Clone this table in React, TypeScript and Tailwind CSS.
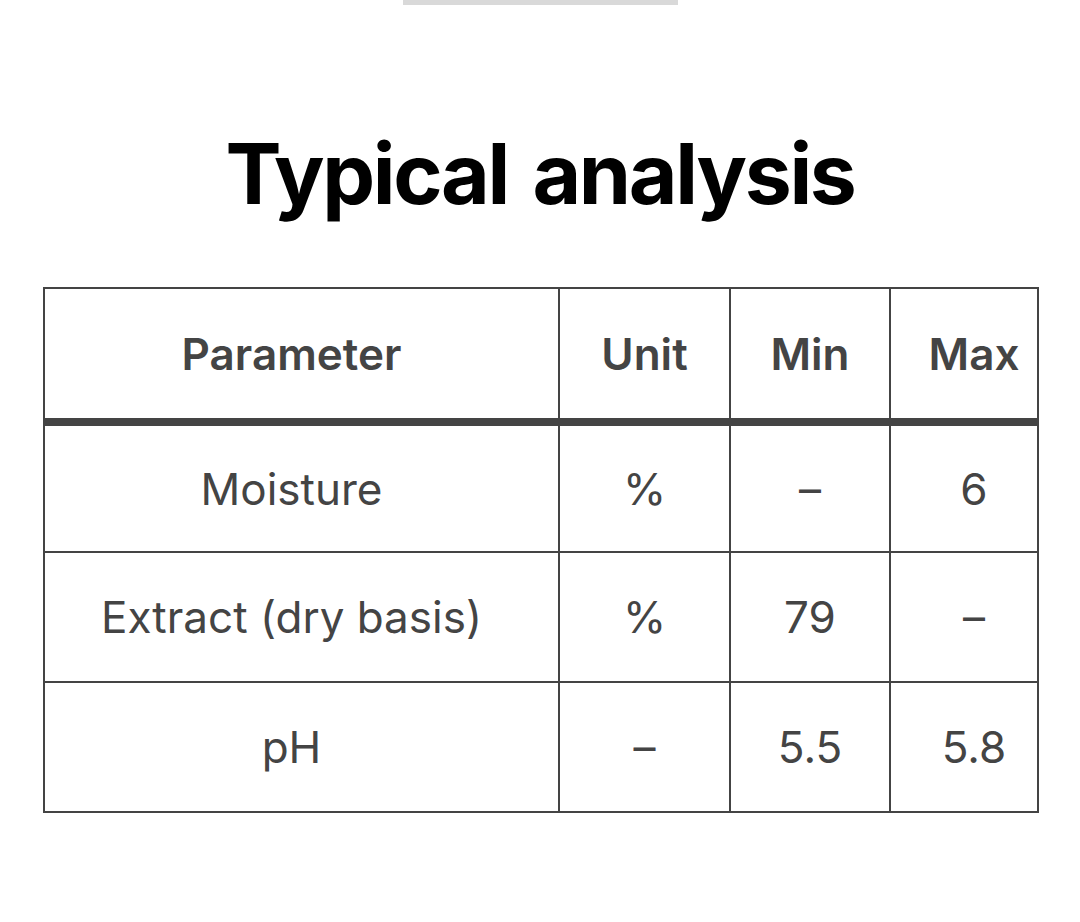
import React from 'react';

const rows = [
  { name: 'Moisture', unit: '%', min: '–', max: '6' },
  { name: 'Extract (dry basis)', unit: '%', min: '79', max: '–' },
  { name: 'pH', unit: '–', min: '5.5', max: '5.8' },
];

const App: React.FC = () => {
  return (
    <div className="min-h-[922px] bg-white font-['Inter','Liberation_Sans',sans-serif] text-[#444]">
      <div className="flex justify-center">
        <div className="h-[5px] w-[275px] bg-[#d9d9d9]" />
      </div>

      <h1 className="mt-[127px] text-center text-[84px] font-bold leading-none tracking-[-0.028em] [word-spacing:7px] text-black">
        Typical analysis
      </h1>

      <div className="mt-[71px] px-[43px]">
        <table className="w-full table-fixed border-collapse text-[44px] leading-none">
          <colgroup>
            <col className="w-[515px]" />
            <col className="w-[171px]" />
            <col className="w-[160px]" />
            <col className="w-[148px]" />
          </colgroup>
          <thead>
            <tr className="h-[134px] border-b-[8px] border-[#444]">
              <th className="border-2 border-[#444] pr-[20px] text-center font-semibold">Parameter</th>
              <th className="border-2 border-[#444] text-center font-semibold">Unit</th>
              <th className="border-2 border-[#444] text-center font-semibold">Min</th>
              <th className="border-2 border-[#444] pl-[20px] text-center font-semibold">Max</th>
            </tr>
          </thead>
          <tbody>
            {rows.map((r) => (
              <tr key={r.name} className="h-[130px]">
                <td className="border-2 border-[#444] pr-[20px] text-center">{r.name}</td>
                <td className="border-2 border-[#444] text-center">{r.unit}</td>
                <td className="border-2 border-[#444] text-center">{r.min}</td>
                <td className="border-2 border-[#444] pl-[20px] text-center">{r.max}</td>
              </tr>
            ))}
          </tbody>
        </table>
      </div>
    </div>
  );
};

export default App;
